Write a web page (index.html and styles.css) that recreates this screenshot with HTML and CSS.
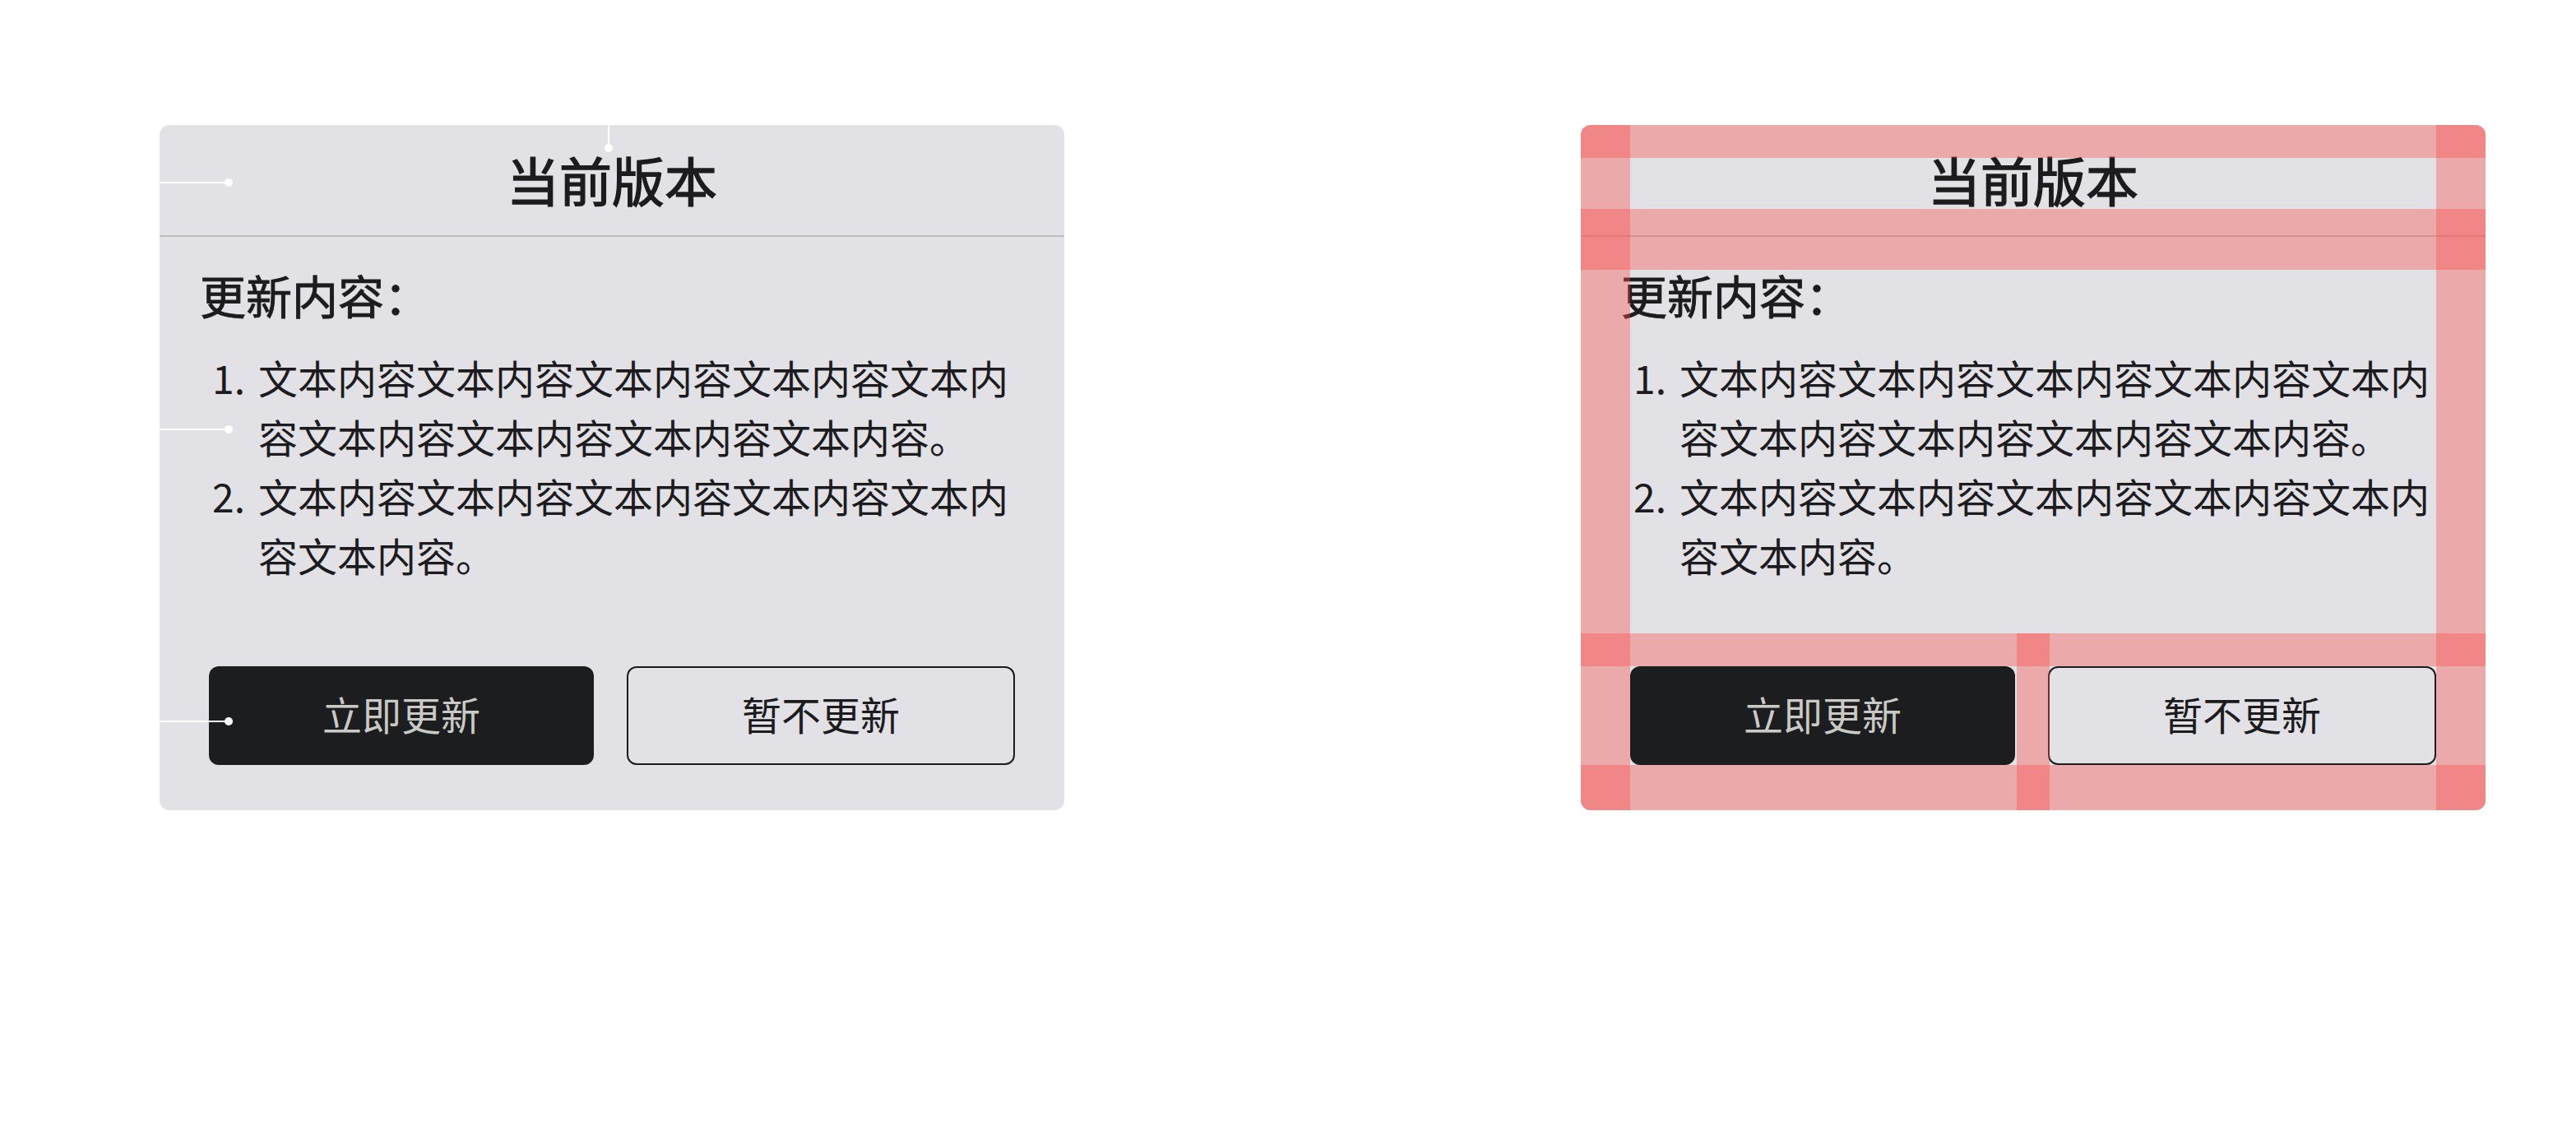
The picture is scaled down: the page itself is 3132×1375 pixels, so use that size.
FILE: index.html
```html
<!DOCTYPE html>
<html>

<head>
    <title>版本更新</title>
    <meta name="viewport" content="width=device-width, initial-scale=1">
    <link rel="stylesheet" href="styles.css">
</head>

<body>

    <div class="page">

        <!-- annotated card -->
        <div class="update-card">
            <div class="card-header">
                <h1 class="card-title">当前版本</h1>
            </div>
            <div class="card-body">
                <h2 class="section-title">更新内容：</h2>
                <ol class="update-list">
                    <li>文本内容文本内容文本内容文本内容文本内容文本内容文本内容文本内容文本内容。</li>
                    <li>文本内容文本内容文本内容文本内容文本内容文本内容。</li>
                </ol>
            </div>
            <div class="card-actions">
                <button type="button" class="btn btn-primary">立即更新</button>
                <button type="button" class="btn btn-secondary">暂不更新</button>
            </div>

            <span class="pin pin-v"></span>
            <span class="pin pin-h pin-title"></span>
            <span class="pin pin-h pin-list"></span>
            <span class="pin pin-h pin-action"></span>
        </div>

        <!-- same card with spacing guides -->
        <div class="update-card">
            <div class="card-header">
                <h1 class="card-title">当前版本</h1>
            </div>
            <div class="card-body">
                <h2 class="section-title">更新内容：</h2>
                <ol class="update-list">
                    <li>文本内容文本内容文本内容文本内容文本内容文本内容文本内容文本内容文本内容。</li>
                    <li>文本内容文本内容文本内容文本内容文本内容文本内容。</li>
                </ol>
            </div>
            <div class="card-actions">
                <button type="button" class="btn btn-primary">立即更新</button>
                <button type="button" class="btn btn-secondary">暂不更新</button>
            </div>

            <div class="guide guide-top"></div>
            <div class="guide guide-divider"></div>
            <div class="guide guide-actions"></div>
            <div class="guide guide-bottom"></div>
            <div class="guide guide-left"></div>
            <div class="guide guide-right"></div>
            <div class="guide guide-gap"></div>
        </div>

    </div>

</body>

</html>
```

FILE: styles.css
```css
body {
    margin: 0;
    background-color: #fff;
    font-family: "Noto Sans CJK SC", "Noto Sans", sans-serif;
    color: #1c1c1e;
}

.page {
    display: flex;
    gap: 628px;
    padding: 152px 0 0 194px;
}

.update-card {
    position: relative;
    width: 1100px;
    background-color: #e2e1e6;
    border-radius: 12px;
    overflow: hidden;
}

.card-header {
    padding: 34px 60px 38px;
    border-bottom: 2px solid #bdbdbd;
    text-align: center;
}

/* medium weight: regular face with a thin stroke */
.card-title {
    margin: 0;
    font-size: 64px;
    line-height: 62px;
    font-weight: 400;
    -webkit-text-stroke: 1.4px #1c1c1e;
}

.card-body {
    padding: 34px 60px 0;
}

.section-title {
    margin: 0 0 28px -11px;
    font-size: 56px;
    line-height: 72px;
    font-weight: 400;
    -webkit-text-stroke: 0.9px #1c1c1e;
}

.update-list {
    margin: 0 0 60px;
    padding-left: 60px;
    font-size: 48px;
    line-height: 72px;
    list-style: none;
    counter-reset: item;
}

.update-list li {
    position: relative;
    counter-increment: item;
}

.update-list li::before {
    content: counter(item) ".";
    position: absolute;
    right: 100%;
    margin-right: 16px;
}

.card-actions {
    display: flex;
    gap: 40px;
    padding: 40px 60px 55px;
}

.btn {
    flex: 1;
    height: 120px;
    padding: 0 0 6px;
    border-radius: 12px;
    font-family: inherit;
    font-size: 48px;
    cursor: pointer;
}

.btn-primary {
    background-color: #1c1d1f;
    color: #c9c9c5;
    border: none;
}

.btn-secondary {
    background-color: transparent;
    color: #1c1c1e;
    border: 2px solid #1c1c1e;
}

/* annotation pins */
.pin {
    position: absolute;
    background-color: #fff;
}

.pin::after {
    content: "";
    position: absolute;
    width: 10px;
    height: 10px;
    border-radius: 50%;
    background-color: #fff;
}

.pin-h {
    left: 0;
    width: 84px;
    height: 2px;
}

.pin-h::after {
    right: -5px;
    top: -4px;
}

.pin-title {
    top: 69px;
}

.pin-list {
    top: 369px;
}

.pin-action {
    top: 724px;
}

.pin-v {
    top: 0;
    left: 545px;
    width: 2px;
    height: 28px;
}

.pin-v::after {
    left: -4px;
    bottom: -5px;
}

/* spacing guides */
.guide {
    position: absolute;
    background-color: rgba(250, 76, 73, 0.375);
}

.guide-top {
    top: 0;
    left: 0;
    right: 0;
    height: 40px;
}

.guide-divider {
    top: 102px;
    left: 0;
    right: 0;
    height: 74px;
}

.guide-actions {
    top: 618px;
    left: 0;
    right: 0;
    height: 40px;
}

.guide-bottom {
    bottom: 0;
    left: 0;
    right: 0;
    height: 55px;
}

.guide-left {
    top: 0;
    bottom: 0;
    left: 0;
    width: 60px;
}

.guide-right {
    top: 0;
    bottom: 0;
    right: 0;
    width: 60px;
}

.guide-gap {
    top: 618px;
    bottom: 0;
    left: 530px;
    width: 40px;
}
```
